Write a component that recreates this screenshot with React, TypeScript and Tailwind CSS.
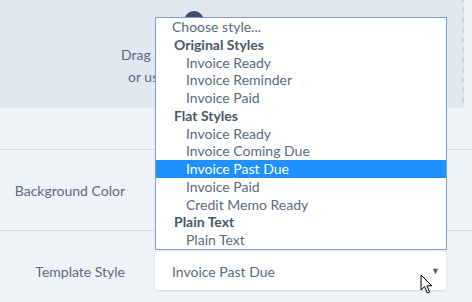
import { useState } from 'react';

// --- DATA ---
interface Option {
  label: string;
  group?: boolean;
  placeholder?: boolean;
}

const OPTIONS: Option[] = [
  { label: 'Choose style...', placeholder: true },
  { label: 'Original Styles', group: true },
  { label: 'Invoice Ready' },
  { label: 'Invoice Reminder' },
  { label: 'Invoice Paid' },
  { label: 'Flat Styles', group: true },
  { label: 'Invoice Ready' },
  { label: 'Invoice Coming Due' },
  { label: 'Invoice Past Due' },
  { label: 'Invoice Paid' },
  { label: 'Credit Memo Ready' },
  { label: 'Plain Text', group: true },
  { label: 'Plain Text' },
];

function Cursor() {
  return (
    <svg width="14" height="21" viewBox="0 0 14 21" className="absolute left-[420px] top-[274px]">
      <path
        d="M1 1 L1 16 L4.5 12.6 L7.3 19 L9.6 18 L6.9 11.8 L11.8 11.8 Z"
        fill="#fff"
        stroke="#000"
        strokeWidth="1"
        strokeLinejoin="round"
      />
    </svg>
  );
}

export default function App() {
  const [selected] = useState(8);

  return (
    <div className="relative w-[472px] h-[302px] overflow-hidden bg-[#eff2f7] text-[14px] text-[#5b6b80] font-['Lato','Open_Sans',sans-serif]">
      {/* drop zone (partly covered by the open listbox) */}
      <div className="h-[108px] w-[464px] bg-[#e2e8f1] border-r-2 border-dashed border-[#cfd7e3] rounded-br-[3px] flex flex-col items-start pt-[3px]">
        <div className="w-[20px] h-[20px] rounded-full bg-[#3e4f67] mt-[8px] ml-[184px]" />
        <p className="mt-[13px] ml-[121px] leading-[22px] whitespace-nowrap">Drag &amp; drop your logo here</p>
        <p className="ml-[128px] leading-[22px] whitespace-nowrap">or use the button below</p>
      </div>

      {/* empty row */}
      <div className="h-[42px] border-b border-[#d3dae5]" />

      {/* background color row */}
      <div className="h-[81px] border-b border-[#d3dae5] flex items-center">
        <span className="w-[125px] text-right">Background Color</span>
      </div>

      {/* template style row */}
      <div className="flex items-center pt-[21px]">
        <span className="w-[125px] text-right">Template Style</span>
        <div className="ml-[30px] w-[291px] h-[38px] bg-white rounded-[3px] shadow-[0_1px_2px_rgba(60,80,110,0.15)] flex items-center justify-between pl-[17px] pr-[6px]">
          <span>{OPTIONS[selected].label}</span>
          <span className="text-[9px] text-[#4f5f75]">▼</span>
        </div>
      </div>

      {/* open listbox */}
      <ul className="absolute left-[155px] top-[17px] w-[292px] bg-white border border-[#7b9bd9]">
        {OPTIONS.map((o, i) => (
          <li
            key={i}
            className={`h-[17.75px] leading-[17.75px] whitespace-nowrap ${
              i === selected
                ? 'bg-[#1e90ff] text-white pl-[30px]'
                : o.group
                ? 'font-bold text-[#4a586d] pl-[18px]'
                : o.placeholder
                ? 'pl-[16px]'
                : 'pl-[30px]'
            }`}
          >
            {o.label}
          </li>
        ))}
      </ul>

      <Cursor />
    </div>
  );
}
